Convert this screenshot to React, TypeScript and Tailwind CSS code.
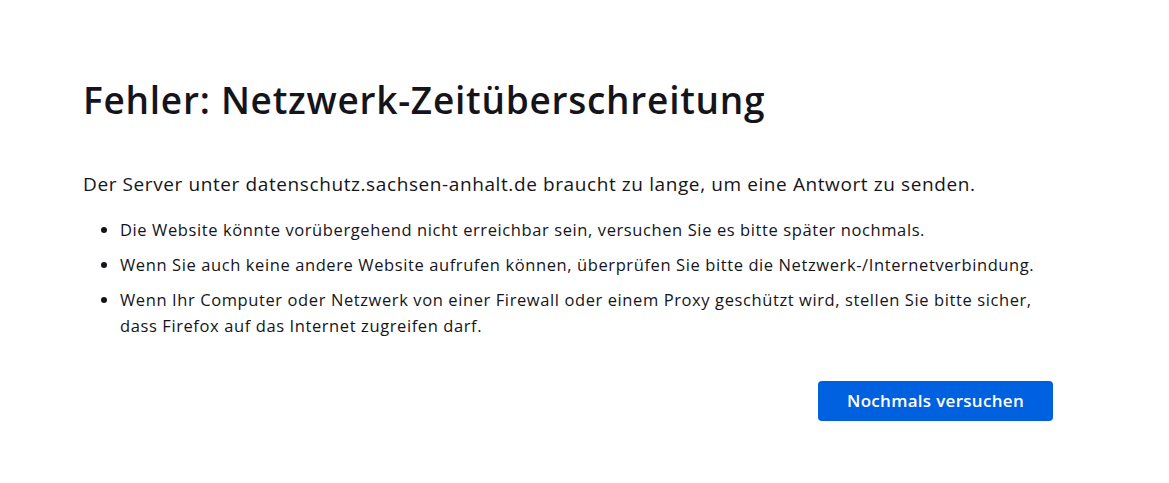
export default function App() {
  return (
    <div className="min-h-[483px] w-full bg-white text-[#15141a]" style={{ fontFamily: '"Open Sans", "Noto Sans", sans-serif' }}>
      <div className="ml-[83px] w-[970px] pt-[76px]">
        <h1 className="text-[37px] leading-[48px] font-semibold tracking-[0.75px]">Fehler: Netzwerk-Zeitüberschreitung</h1>
        <p className="mt-[46px] text-[19px] leading-[28px] tracking-[0.6px]">Der Server unter datenschutz.sachsen-anhalt.de braucht zu lange, um eine Antwort zu senden.</p>
        <ul className="mt-[19px] list-disc pl-[37px] text-[16.5px] leading-[26px] tracking-[0.6px]">
          <li className="mb-[9px]">Die Website könnte vorübergehend nicht erreichbar sein, versuchen Sie es bitte später nochmals.</li>
          <li className="mb-[9px]">Wenn Sie auch keine andere Website aufrufen können, überprüfen Sie bitte die Netzwerk-/Internetverbindung.</li>
          <li>Wenn Ihr Computer oder Netzwerk von einer Firewall oder einem Proxy geschützt wird, stellen Sie bitte sicher, dass Firefox auf das Internet zugreifen darf.</li>
        </ul>
        <div className="mt-[42px] flex justify-end">
          <button className="h-[40px] w-[235px] rounded-[4px] bg-[#0061e0] text-[17px] font-semibold tracking-[0.3px] text-white">Nochmals versuchen</button>
        </div>
      </div>
    </div>
  );
}
